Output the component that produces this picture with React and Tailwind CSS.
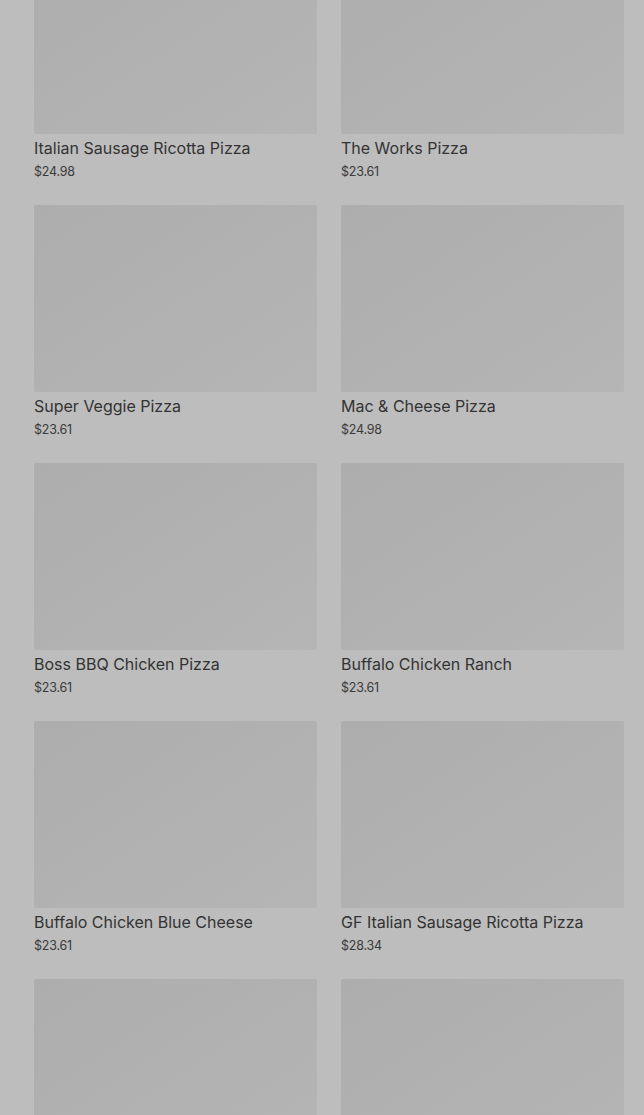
import React from 'react';

const items = [
    { name: 'Italian Sausage Ricotta Pizza', price: '$24.98' },
    { name: 'The Works Pizza', price: '$23.61' },
    { name: 'Super Veggie Pizza', price: '$23.61' },
    { name: 'Mac & Cheese Pizza', price: '$24.98' },
    { name: 'Boss BBQ Chicken Pizza', price: '$23.61' },
    { name: 'Buffalo Chicken Ranch', price: '$23.61' },
    { name: 'Buffalo Chicken Blue Cheese', price: '$23.61' },
    { name: 'GF Italian Sausage Ricotta Pizza', price: '$28.34' },
    // last row is cut off by the viewport, only the images show
    { id: 'next-1' },
    { id: 'next-2' },
];

const Card = ({ name, price }) => (
    <div className="flex flex-col">
        {/* image placeholder, dimmed by the overlay */}
        <div className="h-[187px] rounded-[2px] bg-gradient-to-br from-[#adadad] to-[#b5b5b5]" />
        {name && (
            <>
                <div className="mt-[4px] text-[16px] leading-[20px] text-[#333333]">{name}</div>
                <div className="mt-[5px] text-[12.5px] leading-[18px] tracking-[-0.2px] text-[#3a3a3a]">{price}</div>
            </>
        )}
    </div>
);

export default function App() {
    return (
        <div
            className="h-[1115px] overflow-hidden bg-[#bdbdbd]"
            style={{ fontFamily: 'Inter, "Noto Sans", sans-serif' }}
        >
            <div className="mt-[-53px] grid grid-cols-2 gap-x-[24px] gap-y-[24px] pl-[34px] pr-[20px]">
                {items.map((it, i) => (
                    <Card key={it.name || it.id || i} {...it} />
                ))}
            </div>
        </div>
    );
}
